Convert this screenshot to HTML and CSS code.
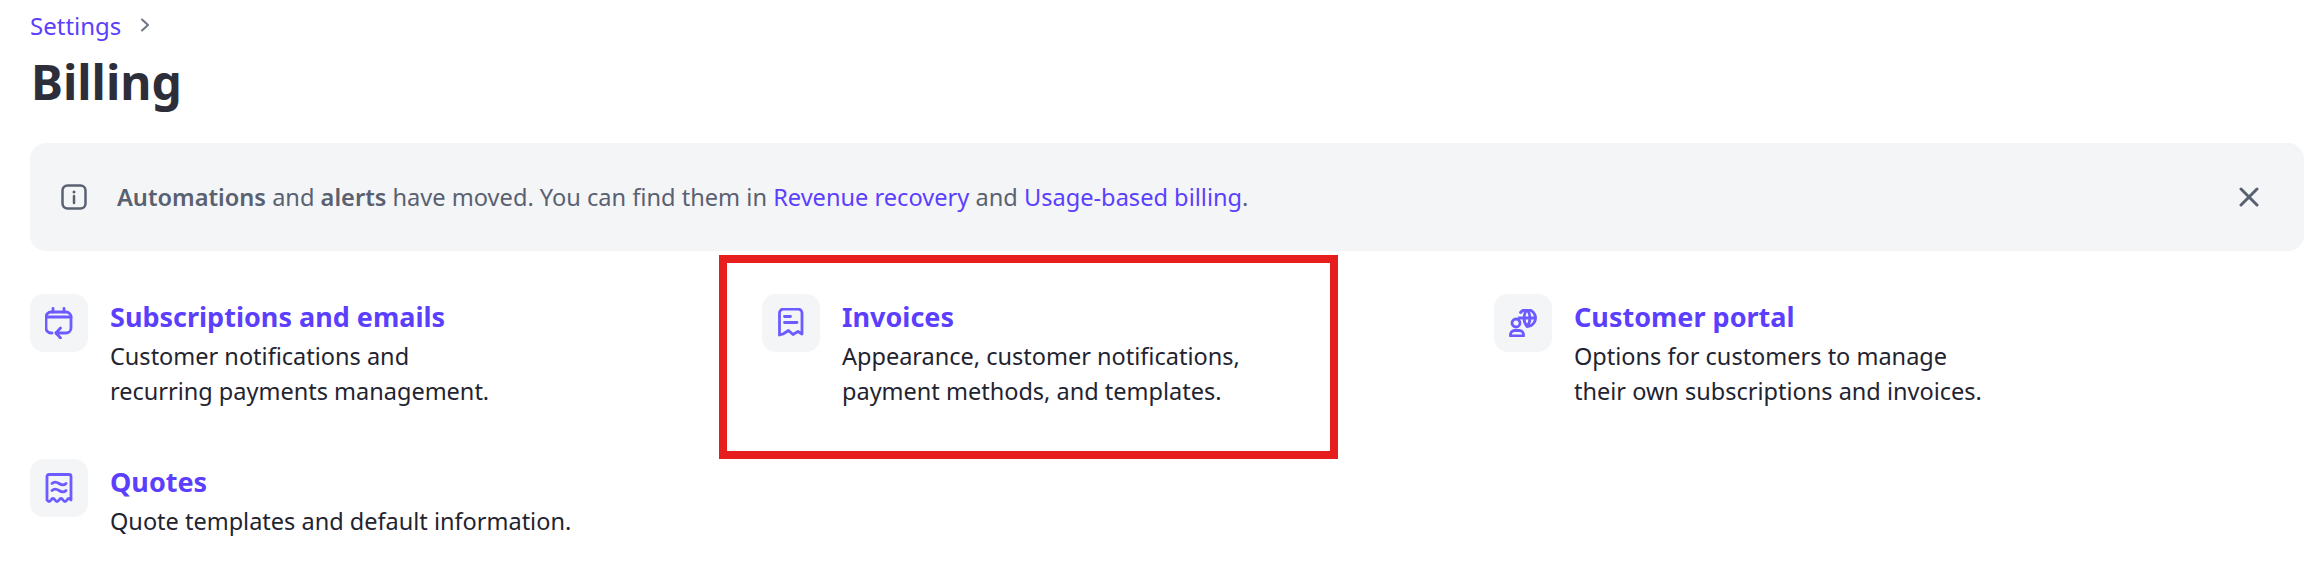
FILE: index.html
```html
<!DOCTYPE html>
<html lang="en">
<head>
    <meta charset="UTF-8">
    <meta name="viewport" content="width=device-width, initial-scale=1.0">
    <title>Billing - Settings</title>
    <link rel="stylesheet" href="styles.css">
</head>
<body>
    <div class="breadcrumb">
        <a href="#">Settings</a>
        <svg class="chevron" viewBox="0 0 10 14" width="10" height="14"><path d="M2 1.500 8 7l-6 5.500"/></svg>
    </div>
    <h1>Billing</h1>

    <div class="banner">
        <svg class="banner-icon" viewBox="0 0 26 26" width="26" height="26">
            <rect x="1.500" y="1.500" width="23" height="23" rx="5"/>
            <path d="M13 12v7"/>
            <circle class="dot" cx="13" cy="8" r="1.500"/>
        </svg>
        <p><b>Automations</b> and <b>alerts</b> have moved. You can find them in <a href="#">Revenue recovery</a> and <a href="#">Usage-based billing</a>.</p>
        <svg class="banner-close" viewBox="0 0 20 20" width="20" height="20"><path d="M2 2l16 16M18 2 2 18"/></svg>
    </div>

    <div class="cards">
        <div class="card">
            <div class="card-icon">
                <svg viewBox="0 0 28 32" width="28" height="32">
                    <path d="M7 26H6a5 5 0 0 1-5-5V10a5 5 0 0 1 5-5h15a5 5 0 0 1 5 5v11a5 5 0 0 1-5 5H11"/>
                    <path d="M8 1.500V5M19 1.500V5M1 10h25M15.500 21 11 26l4.500 5"/>
                </svg>
            </div>
            <div>
                <h2>Subscriptions and emails</h2>
                <p>Customer notifications and<br>recurring payments management.</p>
            </div>
        </div>

        <div class="card">
            <div class="card-icon">
                <svg viewBox="0 0 28 30" width="28" height="30">
                    <path d="M2.500 27V5a4 4 0 0 1 4-4H21a4 4 0 0 1 4 4v21l-4-2.500-5 3-4.500-4-5.500 3.500z"/>
                    <path d="M7.500 8.500h6M7.500 14.500H20"/>
                </svg>
            </div>
            <div>
                <h2>Invoices</h2>
                <p>Appearance, customer notifications,<br>payment methods, and templates.</p>
            </div>
            <div class="highlight"></div>
        </div>

        <div class="card">
            <div class="card-icon">
                <svg viewBox="0 0 28 28" width="28" height="28">
                    <circle cx="7" cy="14" r="4"/>
                    <path d="M1.500 27v-1.500a4 4 0 0 1 4-4h5a4 4 0 0 1 4 4V27z"/>
                    <path d="M11.500 3.500A8.500 8.500 0 1 1 18 17.500M10 9h16.500M18 .5c-4 5-4 12 0 17M18 .5c4 5 4 12 0 17"/>
                </svg>
            </div>
            <div>
                <h2>Customer portal</h2>
                <p>Options for customers to manage<br>their own subscriptions and invoices.</p>
            </div>
        </div>

        <div class="card">
            <div class="card-icon">
                <svg viewBox="0 0 28 32" width="28" height="32">
                    <path d="M2 28V4.500a2 2 0 0 1 2-2h20a2 2 0 0 1 2 2V28q-2-3-4 0t-4 0-4 0-4 0-4 0-4 0z"/>
                    <path d="M7 11.500c2-2 4-2 7 0s5 2 7 0M7 18.500c2-2 4-2 7 0s5 2 7 0"/>
                </svg>
            </div>
            <div>
                <h2>Quotes</h2>
                <p>Quote templates and default information.</p>
            </div>
        </div>
    </div>
</body>
</html>
```

FILE: styles.css
```css
* {
    margin: 0;
    padding: 0;
    box-sizing: border-box;
}

body {
    font-family: "Noto Sans", "Liberation Sans", sans-serif;
    background: white;
    color: #1f2430;
    padding: 8px 0 0 30px;
}

a {
    color: #5b3ffd;
    text-decoration: none;
}

svg {
    fill: none;
    stroke-linecap: round;
    stroke-linejoin: round;
}

.breadcrumb {
    display: flex;
    align-items: center;
    gap: 19px;
    height: 34px;
    font-size: 24px;
}

.chevron {
    stroke: #6b7385;
    stroke-width: 2;
}

h1 {
    margin-top: 7px;
    margin-left: 1px;
    font-size: 48px;
    line-height: 66px;
    font-weight: 700;
    color: #2e2e3a;
}

.banner {
    display: flex;
    align-items: center;
    margin-top: 28px;
    height: 108px;
    padding: 0 45px 0 31px;
    background: #f4f5f7;
    border-radius: 16px;
    font-size: 23.600px;
    color: #596171;
}

.banner p {
    flex: 1;
    margin-left: 30px;
}

.banner b {
    font-weight: 600;
}

.banner-icon {
    stroke: #596171;
    stroke-width: 2.500;
}

.banner-icon .dot {
    fill: #596171;
    stroke: none;
}

.banner-close {
    stroke: #596171;
    stroke-width: 3;
}

.cards {
    display: grid;
    grid-template-columns: repeat(3, 732px);
    row-gap: 50px;
    margin-top: 43px;
}

.card {
    position: relative;
    display: flex;
    gap: 22px;
}

.card-icon {
    display: flex;
    align-items: center;
    justify-content: center;
    flex: none;
    width: 58px;
    height: 58px;
    background: #f4f5f7;
    border-radius: 14px;
}

.card-icon svg {
    stroke: #6c5cff;
    stroke-width: 2.800;
}

.card h2 {
    padding-top: 4px;
    font-size: 27px;
    line-height: 38px;
    font-weight: 700;
    color: #5b3ffd;
}

.card p {
    margin-top: 3px;
    font-size: 23.500px;
    line-height: 35px;
}

/* red annotation box */
.highlight {
    position: absolute;
    left: -43px;
    top: -39px;
    width: 619px;
    height: 204px;
    border: 8px solid #e61e1e;
    pointer-events: none;
}
```
